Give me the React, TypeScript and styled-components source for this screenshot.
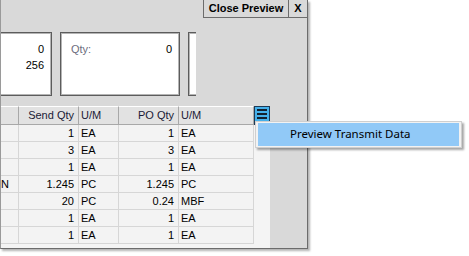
import styled, { createGlobalStyle } from 'styled-components'

const GlobalStyle = createGlobalStyle`
	html, body {
		margin: 0;
		padding: 0;
		background: #ffffff;
	}
	body {
		font-family: 'Liberation Sans', Arial, sans-serif;
		font-size: 11px;
		color: #000;
	}
`

type Row = {
	desc?: string
	sendQty: string
	sendUm: string
	poQty: string
	poUm: string
}

const rows: Row[] = [
	{ sendQty: '1', sendUm: 'EA', poQty: '1', poUm: 'EA' },
	{ sendQty: '3', sendUm: 'EA', poQty: '3', poUm: 'EA' },
	{ sendQty: '1', sendUm: 'EA', poQty: '1', poUm: 'EA' },
	{ desc: 'N', sendQty: '1.245', sendUm: 'PC', poQty: '1.245', poUm: 'PC' },
	{ sendQty: '20', sendUm: 'PC', poQty: '0.24', poUm: 'MBF' },
	{ sendQty: '1', sendUm: 'EA', poQty: '1', poUm: 'EA' },
	{ sendQty: '1', sendUm: 'EA', poQty: '1', poUm: 'EA' },
]

const Page = styled.div`
	position: relative;
	width: 469px;
	height: 256px;
	overflow: hidden;
`

const Window = styled.div`
	width: 308px;
	height: 249px;
	box-sizing: border-box;
	background: #d9d9d9;
	border-left: 1px solid #9a9a9a;
	border-right: 1px solid #6c6c6c;
	border-bottom: 1px solid #6c6c6c;
	box-shadow: 2px 2px 2px rgba(0, 0, 0, 0.3);
	display: flex;
	flex-direction: column;
`

const Toolbar = styled.div`
	display: flex;
	justify-content: flex-end;
	height: 18px;
`

const ToolButton = styled.div<{ $width: number }>`
	width: ${({ $width }) => $width}px;
	height: 18px;
	box-sizing: border-box;
	border-left: 1px solid #6c6c6c;
	border-bottom: 1px solid #6c6c6c;
	font-weight: bold;
	font-size: 11px;
	line-height: 17px;
	text-align: center;
	color: #000;
`

const CardViewport = styled.div`
	width: 195px;
	margin-top: 14px;
	overflow: hidden;
`

const CardStrip = styled.div`
	display: flex;
	gap: 8px;
	margin-left: -69px;
`

const Card = styled.div`
	flex: 0 0 120px;
	height: 64px;
	box-sizing: border-box;
	border: 1px solid #5c5c5c;
	box-shadow: inset 0 0 0 1px #b4b4b4;
	background: #ffffff;
	padding: 8px 7px 0 10px;
`

const CardLine = styled.div`
	display: flex;
	justify-content: space-between;
	line-height: 16px;
`

const Label = styled.span`
	color: #6e6e80;
`

const GridControl = styled.div`
	margin-top: 10px;
	width: 269px;
	flex: 1;
	display: flex;
	background: #f4f4f4;
`

const Table = styled.div`
	display: grid;
	grid-template-columns: 18px 60px 40px 60px 75px;
	grid-template-rows: 19px;
	grid-auto-rows: 17px;
	align-content: start;
`

const RowGroup = styled.div`
	display: contents;
`

const HeadCell = styled.div<{ $align?: 'left' | 'right' }>`
	box-sizing: border-box;
	background: #e2e2e2;
	border-top: 1px solid #ffffff;
	border-right: 1px solid #a8a8a8;
	border-bottom: 1px solid #a8a8a8;
	padding: 0 4px 0 2px;
	line-height: 17px;
	text-align: ${({ $align }) => $align ?? 'left'};
	color: #1a1a36;
	white-space: nowrap;
	overflow: hidden;
`

const Cell = styled.div<{ $align?: 'left' | 'right' }>`
	box-sizing: border-box;
	background: #f3f3f3;
	border-right: 1px solid #d6d6d6;
	border-bottom: 1px solid #d6d6d6;
	padding: ${({ $align }) => ($align === 'right' ? '0 4px 0 2px' : '0 2px 0 2px')};
	line-height: 16px;
	text-align: ${({ $align }) => $align ?? 'left'};
	white-space: nowrap;
	overflow: hidden;
`

const DescCell = styled(Cell)`
	padding: 0;
`

const SideStrip = styled.div`
	width: 16px;
`

const MenuButton = styled.div`
	width: 16px;
	height: 19px;
	box-sizing: border-box;
	background: #45b0ea;
	border: 1px solid #1d3a56;
	display: flex;
	flex-direction: column;
	align-items: center;
	gap: 2px;
	padding-top: 2px;
`

const Bar = styled.div`
	width: 10px;
	height: 2px;
	background: #13202e;
`

const Menu = styled.div`
	position: absolute;
	left: 255px;
	top: 121px;
	width: 207px;
	height: 27px;
	box-sizing: border-box;
	background: #f2f2f2;
	border: 1px solid #cfcfcf;
	padding: 1px 2px;
	box-shadow: 2px 2px 2px rgba(0, 0, 0, 0.35);
`

const MenuItem = styled.div`
	height: 23px;
	box-sizing: border-box;
	background: #91c9f7;
	border: 1px solid #91c9f7;
	padding-left: 31px;
	font-family: 'Noto Sans', 'Open Sans', sans-serif;
	font-size: 11.5px;
	line-height: 20px;
	color: #000;
`

export default function App() {
	return (
		<Page>
			<GlobalStyle />
			<Window>
				<Toolbar>
					<ToolButton $width={85}>Close Preview</ToolButton>
					<ToolButton $width={19}>X</ToolButton>
				</Toolbar>
				<CardViewport>
					<CardStrip>
						<Card>
							<CardLine>
								<Label></Label>
								<span>0</span>
							</CardLine>
							<CardLine>
								<Label></Label>
								<span>256</span>
							</CardLine>
						</Card>
						<Card>
							<CardLine>
								<Label>Qty:</Label>
								<span>0</span>
							</CardLine>
						</Card>
						<Card />
					</CardStrip>
				</CardViewport>
				<GridControl>
					<Table>
						<RowGroup>
							<HeadCell />
							<HeadCell $align="right">Send Qty</HeadCell>
							<HeadCell>U/M</HeadCell>
							<HeadCell $align="right">PO Qty</HeadCell>
							<HeadCell>U/M</HeadCell>
						</RowGroup>
						{rows.map((r, i) => (
							<RowGroup key={i}>
								<DescCell>{r.desc}</DescCell>
								<Cell $align="right">{r.sendQty}</Cell>
								<Cell>{r.sendUm}</Cell>
								<Cell $align="right">{r.poQty}</Cell>
								<Cell>{r.poUm}</Cell>
							</RowGroup>
						))}
					</Table>
					<SideStrip>
						<MenuButton>
							<Bar />
							<Bar />
							<Bar />
						</MenuButton>
					</SideStrip>
				</GridControl>
			</Window>
			<Menu>
				<MenuItem>Preview Transmit Data</MenuItem>
			</Menu>
		</Page>
	)
}
